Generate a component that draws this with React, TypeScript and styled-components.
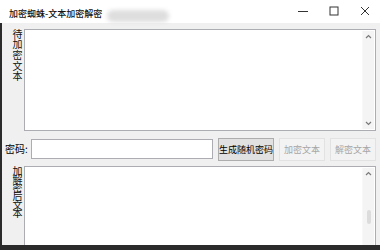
import React from 'react'
import styled, { createGlobalStyle } from 'styled-components'

const Global = createGlobalStyle`
    html, body {
        margin: 0;
        padding: 0;
        background: #2b2b2b;
    }
    * {
        box-sizing: border-box;
    }
`

const Window = styled.div`
    width: 380px;
    height: 250px;
    display: flex;
    flex-direction: column;
    overflow: hidden;
    font-family: 'Noto Sans CJK SC', 'Noto Sans', sans-serif;
    color: #000;
`

const TitleBar = styled.div`
    height: 23px;
    flex: none;
    background: #fff;
    display: flex;
    align-items: flex-start;
`

const Title = styled.div`
    padding: 8px 0 0 9px;
    font-size: 9px;
    line-height: 12px;
    font-weight: 500;
    color: #111;
    white-space: nowrap;
`

const Smudge = styled.div`
    margin: 10px 0 0 5px;
    width: 62px;
    height: 12px;
    border-radius: 6px;
    background: #dedede;
    filter: blur(2px);
`

const Controls = styled.div`
    margin-left: auto;
    display: flex;
`

const ControlButton = styled.div`
    width: 31px;
    height: 23px;
    display: flex;
    align-items: center;
    justify-content: center;
    padding-bottom: 2px;
`

const Body = styled.div`
    flex: 1;
    min-height: 0;
    overflow: hidden;
    background: #f0f0f0;
    border-left: 2px solid #2b2b2b;
    padding: 6px 4px 0 3px;
    display: flex;
    flex-direction: column;
`

const Section = styled.div<{ $height: number; $gap: number }>`
    display: flex;
    height: ${(p) => p.$height}px;
    flex: none;
    margin-top: ${(p) => p.$gap}px;
`

const SideLabel = styled.div<{ $spacing: number }>`
    width: 19px;
    flex: none;
    padding: 0 2px 0 8px;
    writing-mode: vertical-rl;
    text-orientation: upright;
    font-size: 10px;
    line-height: 10px;
    letter-spacing: ${(p) => p.$spacing}px;
    color: #111;
`

const TextBox = styled.div`
    flex: 1;
    display: flex;
    background: #fff;
    border: 1px solid #abadb3;
`

const TextArea = styled.div`
    flex: 1;
`

const ScrollBar = styled.div`
    width: 12px;
    margin: 1px 1px 1px 0;
    background: #f4f4f4;
    border-left: 1px solid #f8f8f8;
    display: flex;
    flex-direction: column;
    align-items: center;
    padding: 3px 0;
`

const Thumb = styled.div<{ $top: number; $size: number }>`
    width: 4px;
    height: ${(p) => p.$size}px;
    margin-top: ${(p) => p.$top}px;
    border-radius: 2px;
    background: #dcdcdc;
`

const Spacer = styled.div`
    flex: 1;
`

const PasswordRow = styled.div`
    display: flex;
    align-items: center;
    height: 24px;
    flex: none;
    margin-top: 6px;
`

const PasswordLabel = styled.div`
    width: 26px;
    flex: none;
    font-size: 10px;
    line-height: 12px;
    white-space: nowrap;
`

const Input = styled.div`
    width: 183px;
    height: 20px;
    background: #fff;
    border: 1px solid #abadb3;
`

const Button = styled.div<{ $disabled?: boolean; $width: number; $gap: number }>`
    width: ${(p) => p.$width}px;
    height: 23px;
    margin-left: ${(p) => p.$gap}px;
    flex: none;
    display: flex;
    align-items: center;
    justify-content: center;
    font-size: 9px;
    white-space: nowrap;
    background: ${(p) => (p.$disabled ? '#f3f3f3' : '#e1e1e1')};
    border: 1px solid ${(p) => (p.$disabled ? '#e2e2e2' : '#adadad')};
    color: ${(p) => (p.$disabled ? '#a6a6a6' : '#000')};
`

const Footer = styled.div`
    height: 5px;
    flex: none;
    background: #2b2b2b;
`

const Chevron: React.FC<{ up?: boolean }> = ({ up }) => (
    <svg width="7" height="5" viewBox="0 0 7 5">
        <path d={up ? 'M1 4 L3.5 1.5 L6 4' : 'M1 1 L3.5 3.5 L6 1'} fill="none" stroke="#7a7a7a" strokeWidth="1.2" />
    </svg>
)

const App: React.FC = () => {
    return (
        <Window>
            <Global />
            <TitleBar>
                <Title>加密蜘蛛-文本加密解密</Title>
                <Smudge />
                <Controls>
                    <ControlButton>
                        <svg width="12" height="10" viewBox="0 0 12 10">
                            <path d="M1 5.5 H11" stroke="#333" strokeWidth="1" />
                        </svg>
                    </ControlButton>
                    <ControlButton>
                        <svg width="10" height="10" viewBox="0 0 10 10">
                            <rect x="1" y="1" width="8" height="8" fill="none" stroke="#333" strokeWidth="1" />
                        </svg>
                    </ControlButton>
                    <ControlButton>
                        <svg width="10" height="10" viewBox="0 0 10 10">
                            <path d="M1 1 L9 9 M9 1 L1 9" stroke="#333" strokeWidth="1" />
                        </svg>
                    </ControlButton>
                </Controls>
            </TitleBar>
            <Body>
                <Section $height={102} $gap={0}>
                    <SideLabel $spacing={0.6}>待加密文本</SideLabel>
                    <TextBox>
                        <TextArea />
                        <ScrollBar>
                            <Chevron up />
                            <Spacer />
                            <Chevron />
                        </ScrollBar>
                    </TextBox>
                </Section>
                <PasswordRow>
                    <PasswordLabel>密码:</PasswordLabel>
                    <Input />
                    <Button $width={56} $gap={5}>生成随机密码</Button>
                    <Button $width={46} $gap={5} $disabled>加密文本</Button>
                    <Button $width={46} $gap={5} $disabled>解密文本</Button>
                </PasswordRow>
                <Section $height={86} $gap={5}>
                    <SideLabel $spacing={-1.5}>加解密后文本</SideLabel>
                    <TextBox>
                        <TextArea />
                        <ScrollBar>
                            <Chevron up />
                            <Thumb $top={34} $size={14} />
                        </ScrollBar>
                    </TextBox>
                </Section>
            </Body>
            <Footer />
        </Window>
    )
}

export default App
